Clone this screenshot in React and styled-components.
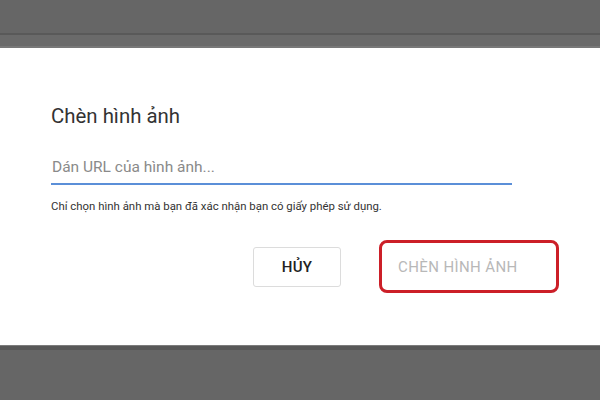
import styled, { createGlobalStyle } from "styled-components";

const GlobalStyle = createGlobalStyle`
  html, body {
    margin: 0;
    padding: 0;
    background: #666666;
  }
  body {
    font-family: Roboto, "Noto Sans", "Liberation Sans", sans-serif;
  }
`;

const Page = styled.div`
  width: 600px;
  height: 400px;
  display: flex;
  flex-direction: column;
  background: #666666;
  overflow: hidden;
`;

const TopBar = styled.div`
  height: 33px;
  flex-shrink: 0;
  background: #666666;
  border-bottom: 2px solid #595959;
`;

const Strip = styled.div`
  height: 11px;
  flex-shrink: 0;
  background: #6a6a6a;
  border-bottom: 2px solid #787878;
`;

const Dialog = styled.div`
  height: 297px;
  flex-shrink: 0;
  box-sizing: border-box;
  background: #ffffff;
  padding: 56px 41px 0 51px;
  display: flex;
  flex-direction: column;
`;

const Title = styled.h2`
  margin: 0;
  font-size: 20.4px;
  font-weight: 400;
  line-height: 24px;
  color: #333333;
`;

const UrlInput = styled.input`
  margin-top: 27px;
  width: 461px;
  height: 30px;
  box-sizing: border-box;
  border: none;
  border-bottom: 2px solid #5b8fd8;
  padding: 0 0 4px 1px;
  font-family: inherit;
  font-size: 15.5px;
  color: #333333;
  outline: none;
  background: transparent;
  &::placeholder {
    color: #8a8a8a;
  }
`;

const Hint = styled.p`
  margin: 14px 0 0;
  font-size: 11.4px;
  line-height: 14px;
  color: #333333;
`;

const Actions = styled.div`
  margin-top: 27px;
  display: flex;
  justify-content: flex-end;
  align-items: center;
  gap: 38px;
`;

const Button = styled.button`
  box-sizing: border-box;
  font-family: inherit;
  text-transform: uppercase;
  background: #ffffff;
  cursor: pointer;
  display: flex;
  align-items: center;
`;

const CancelButton = styled(Button)`
  width: 88px;
  height: 40px;
  justify-content: center;
  border: 1px solid #dcdcdc;
  border-radius: 3px;
  font-size: 15px;
  font-weight: 500;
  color: #222222;
  letter-spacing: 0.3px;
`;

const InsertButton = styled(Button)`
  width: 180px;
  height: 53px;
  padding-left: 16px;
  border: 3px solid #cc1f28;
  border-radius: 8px;
  font-size: 15px;
  font-weight: 400;
  color: #b8b8b8;
  letter-spacing: 0.4px;
`;

const BottomEdge = styled.div`
  flex-shrink: 0;
  height: 4px;
  background: #585858;
  border-top: 1px solid #7c7c7c;
`;

const App = () => {
  return (
    <>
      <GlobalStyle />
      <Page>
        <TopBar />
        <Strip />
        <Dialog>
          <Title>Chèn hình ảnh</Title>
          <UrlInput placeholder="Dán URL của hình ảnh..." />
          <Hint>
            Chỉ chọn hình ảnh mà bạn đã xác nhận bạn có giấy phép sử dụng.
          </Hint>
          <Actions>
            <CancelButton>Hủy</CancelButton>
            <InsertButton disabled>Chèn hình ảnh</InsertButton>
          </Actions>
        </Dialog>
        <BottomEdge />
      </Page>
    </>
  );
};

export default App;
